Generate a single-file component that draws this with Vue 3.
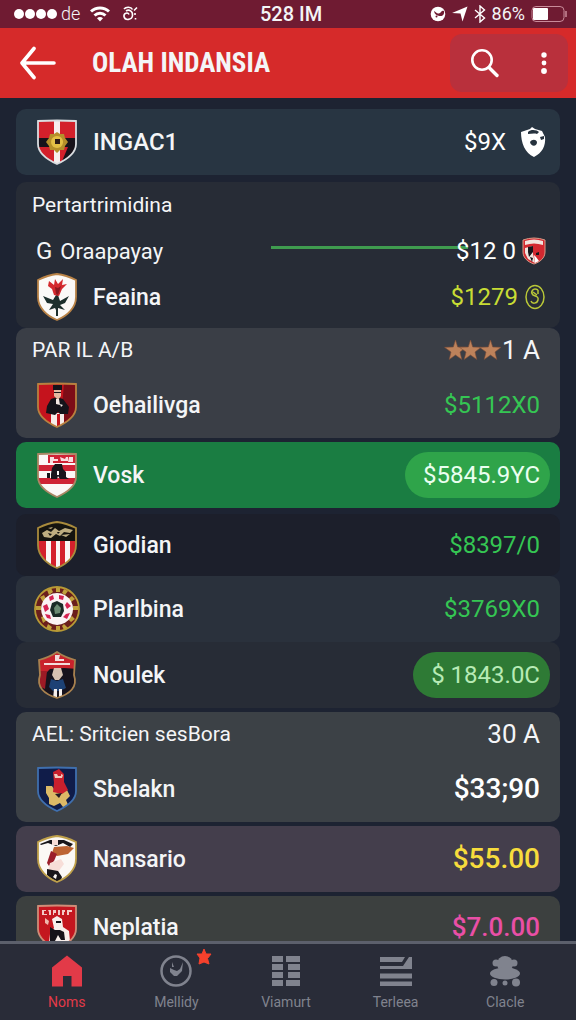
<template>
  <div class="app">
    <div class="status">
      <div class="status-side">
        <span class="signal"><i v-for="n in 4" :key="n"></i></span>
        <span class="carrier">de</span>
        <svg class="wifi" width="20" height="16" viewBox="0 0 20 16" fill="none" stroke="#fff" stroke-width="3">
          <path d="M1 5.5C6 .8 14 .8 19 5.5" />
          <path d="M4.5 9.5c3.2-3 7.800-3 11 0" />
          <path d="M10 15.500l-3-3.300c1.700-1.500 4.300-1.500 6 0z" fill="#fff" stroke="none" />
        </svg>
        <svg width="16" height="16" viewBox="0 0 16 16" fill="none" stroke="#fff" stroke-width="1.600">
          <path d="M2 3c2-2.500 7-2.500 8.500.500M4 5c3-2 7 0 6.500 4.500C10 14 3 15 2 10.500 1.500 7 6 6 7 8.500M12 4.500L15 1.500M13 7v2M13.500 12v1.500" />
        </svg>
      </div>
      <span class="clock">528 IM</span>
      <div class="status-side end">
        <svg width="16" height="16" viewBox="0 0 16 16">
          <circle cx="8" cy="8" r="7.300" fill="#fff" />
          <path d="M4 5c2 1 2.500 3 5 2.500S11 4 14 5c.500 3-1 5-3.500 5S4.500 9 4 5z" fill="#6f1b32" />
          <circle cx="6.500" cy="10.500" r="1" fill="#6f1b32" />
        </svg>
        <svg width="16" height="16" viewBox="0 0 16 16" fill="#fff">
          <path d="M0 7L15.500.500 10.500 15.500 8.500 7.500z" />
        </svg>
        <svg width="12" height="18" viewBox="0 0 12 18" fill="none" stroke="#fff" stroke-width="1.400">
          <path d="M1 5l9.500 8L6 17V1l4.500 4L1 13" />
        </svg>
        <span class="percent">86%</span>
        <svg width="37" height="18" viewBox="0 0 37 18">
          <rect x="1" y="1.500" width="32" height="15" rx="4" fill="none" stroke="#c98b9a" />
          <rect x="2" y="3" width="15" height="12" rx="1" fill="#fff" />
          <path d="M35 6v6" stroke="#c98b9a" stroke-width="1.500" />
        </svg>
      </div>
    </div>

    <header class="topbar">
      <button class="icon-btn back" aria-label="Back">
        <svg width="36" height="34" viewBox="0 0 36 34" fill="none" stroke="#fff" stroke-width="3.600" stroke-linecap="round" stroke-linejoin="round">
          <path d="M14 2.500L2 17l12 14.500M3 17h31" />
        </svg>
      </button>
      <h1>OLAH INDANSIA</h1>
      <div class="actions">
        <button class="icon-btn" aria-label="Search">
          <svg width="30" height="30" viewBox="0 0 30 30" fill="none" stroke="#fff" stroke-width="2.600" stroke-linecap="round">
            <circle cx="12" cy="12" r="9.700" />
            <path d="M19 19.500l8 8" stroke-width="3.400" />
          </svg>
        </button>
        <button class="icon-btn" aria-label="More">
          <svg width="8" height="24" viewBox="0 0 8 24" fill="#fff">
            <circle cx="4" cy="4" r="2.700" />
            <circle cx="4" cy="12" r="2.400" />
            <circle cx="4" cy="20" r="2.900" />
          </svg>
        </button>
      </div>
    </header>

    <main class="list">
      <section
        v-for="card in cards"
        :key="card.id"
        class="card"
        :class="card.tone"
      >
        <div v-if="card.title" class="card-head">
          <h2>{{ card.title }}</h2>
          <span v-if="card.count" class="count">
            <svg v-if="card.stars" width="58" height="22" viewBox="0 0 58 22" fill="#bd825b" stroke="#7d4e38" stroke-width=".6">
              <path
                v-for="x in [0, 15, 35]"
                :key="x"
                :transform="`translate(${x} 0)`"
                d="M11.500 1l2.200 7 8.300.300-6 4.700 1.800 7.500-6.300-4.500L5.200 20.500 7 13 .500 8.300 9.300 8z"
              />
            </svg>
            {{ card.count }}
          </span>
        </div>

        <div
          v-for="row in card.rows"
          :key="row.name"
          class="row"
          :class="{ plain: !row.crest }"
        >
          <svg v-if="row.crest" class="crest" width="42" height="48" viewBox="0 0 42 48">
            <clipPath :id="'clip-' + row.crest">
              <path :d="crests[row.crest].outline" />
            </clipPath>
            <g :clip-path="`url(#clip-${row.crest})`">
              <path
                v-for="(shape, i) in crests[row.crest].shapes"
                :key="i"
                :d="shape[1]"
                :fill="shape[0]"
              />
            </g>
            <path
              :d="crests[row.crest].outline"
              fill="none"
              :stroke="crests[row.crest].border"
              stroke-width="1.800"
            />
          </svg>
          <span v-else class="mark">G</span>
          <span class="name">{{ row.name }}</span>
          <span v-if="row.line" class="line"></span>
          <span class="price" :class="row.color">{{ row.price }}</span>

          <svg v-if="row.badge === 'mask'" class="badge" width="26" height="32" viewBox="0 0 26 32">
            <path d="M1 6l9-3 2-2 3 2 7 2 3 6c1 9-3 16-11 20C5 27 1 17 1 6z" fill="#fff" />
            <path d="M8 6c3-3 9-2 11 0l-2 2c-3-1-6 0-9 0zM10 16c2-3 6-3 7 0 0 5-6 5-7 0zM20 11l4-1v3l-3 1z" fill="#26323e" />
          </svg>
          <svg v-if="row.badge === 'shield'" class="badge" width="24" height="28" viewBox="0 0 24 28">
            <path d="M1 3q11-4 22 0v12c0 6-5 10-11 12C6 25 1 21 1 15z" fill="#d32830" stroke="#d99b87" />
            <path d="M3 4q9-3 18 0v4q-9-3-18 0zM3 11l8-2v8l2 9-7-4-3-6z" fill="#f1e4de" />
            <path d="M6 10l5-1v6l-4 5-1-5zM14 16l3-1v3h-3zM8 20l3 1-1 4z" fill="#17141a" />
            <path d="M12 18l2 2 3 4-4 2z" fill="#fff" />
          </svg>
          <svg v-if="row.badge === 'coin'" class="badge" width="22" height="26" viewBox="0 0 22 26" fill="none" stroke="#b9c738" stroke-width="1.500">
            <ellipse cx="11" cy="13" rx="9" ry="11.500" />
            <path d="M14 6c-5-3-8 2-5 5 3 1 6 2 5 5-1 4-6 4-7 1M14 6v4M9 8l4 3" />
          </svg>
        </div>
      </section>
    </main>

    <nav class="tabs">
      <a
        v-for="tab in tabs"
        :key="tab.label"
        href="#"
        class="tab"
        :class="{ active: tab.active }"
      >
        <svg width="34" height="34" viewBox="0 0 34 34" fill="currentColor">
          <path v-if="tab.icon === 'home'" d="M17 1.500L32 13.500V32.500H21.500V22h-8.500v10.500H2V13.500z" />
          <g v-if="tab.icon === 'clock'">
            <circle cx="17" cy="17" r="14.500" fill="none" stroke="currentColor" stroke-width="2.500" />
            <path d="M11 14l4 2 3 1 3-2 3-7-1 9-5 5h-3l-4-4zM13 8l2 5h-2z" />
          </g>
          <path v-if="tab.icon === 'grid'" d="M3 2h11v6H3zM17 2h14v6H17zM3 10h11v6H3zM19 10h12v6H19zM3 18h11v6H3zM19 18h12v6H19zM3 26h11v6H3zM17 26h14v6H17z" />
          <path v-if="tab.icon === 'lines'" d="M1 3h25l-3 5H1zM1 12h23l6-9h3v12H1zM1 19.500h32v5H1zM1 27.500h32v4.500H1z" />
          <g v-if="tab.icon === 'bear'">
            <circle cx="17" cy="10" r="8" />
            <circle cx="8" cy="9" r="3.500" />
            <circle cx="26" cy="9" r="3.500" />
            <ellipse cx="17" cy="19.500" rx="15" ry="6" />
            <circle cx="6" cy="28.500" r="3.500" />
            <circle cx="17" cy="29" r="2.500" />
            <circle cx="28" cy="28.500" r="4" />
          </g>
        </svg>
        <svg v-if="tab.alert" class="alert" width="16" height="18" viewBox="0 0 16 18">
          <path d="M8 1l2 5h5l-3.500 4.500L13 16l-5-2-5 2 1-6-3-4h5z" fill="#f5412c" stroke="#f5412c" stroke-linejoin="round" />
        </svg>
        <span>{{ tab.label }}</span>
      </a>
    </nav>
  </div>
</template>

<script setup>
const shield = "M2 3Q21 2 40 3V26C40 35 32 41 21 46 10 41 2 35 2 26Z";
const rounded = "M2 7Q12 2 21 1 30 2 40 7V24C40 35 31 43 21 47 11 43 2 35 2 24Z";
const full = "M-2 0H44V48H-2Z";

// each shape is [fill, path], painted in order inside the outline
const crests = {
  ingac: {
    outline: shield,
    border: "#d9dde0",
    shapes: [
      ["#d3202b", full],
      ["#17121a", "M0 20H42V29H0ZM32 29H42V48H24Z"],
      ["#f7eeee", "M18 0H24V48H18Z"],
      ["#b58f2a", "M21 14l3 2 4 0 1 4 3 4-3 4-1 4-4 0-3 3-3-3-4 0-1-4-3-4 3-4 1-4 4 0z"],
      ["#e3bf45", "M21 18a6 6 0 1 0 .1 0z"],
      ["#2c1b16", "M19 21h5v5h-5z"]
    ]
  },
  feana: {
    outline: rounded,
    border: "#b98347",
    shapes: [
      ["#fbf9f7", full],
      ["#1d2f2c", "M20 22l2 0 2 6 9-5-4 7-5 2 5 5-7-2-1 4-2-4-6 2 4-6-6-1-4-7 10 4z"],
      ["#d42a2e", "M13 8l5 4 1-6 3 5 5-5-1 6 5-1-5 5-3 7-5-1-2-6-4-3z"],
      ["#8c1920", "M19 14l3 1 3-2-3 9-2-1z"],
      ["#1d2f2c", "M20 35h2v8h-2z"]
    ]
  },
  oehal: {
    outline: shield,
    border: "#b9803f",
    shapes: [
      ["#c5131d", full],
      ["#7d0d17", "M28 3H42V48H24Z"],
      ["#f6ece9", "M15 32h13v16H15z"],
      ["#c5131d", "M21 33h3v15h-3z"],
      ["#15131a", "M15 18l6-2 6 2 6 8-1 7-8 0-2-2-3 3-9-2 1-7z"],
      ["#e3b9a3", "M18 7h7v8l-3 4-4-4z"],
      ["#15131a", "M17 4h9v5h-9zM18 11h7v1h-7z"],
      ["#f4e9e5", "M20 18h3l1 6-4-1zM24 23l3 1-2 2z"]
    ]
  },
  vask: {
    outline: shield,
    border: "#a98664",
    shapes: [
      ["#fbf7f6", full],
      ["#cf2335", "M12 4h29v8H12zM0 14h42v6H0zM0 27h42v6H0z"],
      ["#f8dfe0", "M14 6h4v2h4v2h-5v2h-3zM24 6l5 2 1-2h2v4h-7zM33 6h4v5h-5z"],
      ["#17151b", "M19 13h7l1 5 3 3v5l3 2h-9l-2-3-1 3h-6v-5l1-6zM11 22h3v5h-3z"],
      ["#fbf7f6", "M21 20h2v4h-2z"]
    ]
  },
  giodian: {
    outline: rounded,
    border: "#a98b3c",
    shapes: [
      ["#faf6f5", full],
      ["#d4212c", "M0 20h10v28H0zM15 20h5v28h-5zM24 20h5v28h-5zM34 20h8v28h-8z"],
      ["#15140f", "M0 0h42v20H0z"],
      ["#bfae80", "M6 12l5-3 4 2 4-4 4 3 6-3 8 2-3 3-6-1-4 4-4-2-5 4-7-1zM12 7l5-1-2 2zM25 14l9-1-4 3z"],
      ["#15140f", "M12 12l4 1-2 2zM21 11l3 0-2 2z"]
    ]
  },
  plarlbina: {
    outline: "M21 2A22 22 0 0 1 21 46 22 22 0 0 1 21 2Z",
    border: "#b89a35",
    shapes: [
      ["#6b1f1c", full],
      ["#c0a13c", "M20 2h4v5h-4zM28 4l4 2-3 4-3-2zM36 11l3 3-4 3-3-3zM37 21h5v4h-5zM36 31l3 3-4 3-3-3zM28 39l4 4-4 2-2-4zM20 41h4v5h-4zM12 39l4 3-2 4-4-2zM5 32l4-1 2 4-4 3zM0 21h5v4H0zM4 12l4-2 2 4-3 3zM11 5l4-2 2 4-4 3z"],
      ["#faf3f4", "M21 8a16 16 0 1 0 .1 0z"],
      ["#d52452", "M13 12l4-2 1 4-4 2zM23 10l5 1-1 4-4-1zM31 17l4 4-4 3-2-4zM7 21l4-2 2 5-4 3zM30 29l4-1-3 6-4-2zM9 29l5 1 1 4-4-1z"],
      ["#1b2a26", "M21 16l6 3 1 7-3 6h-8l-3-7 2-7z"],
      ["#6c8a73", "M21 19l4 4-1 5-5 1-1-6z"]
    ]
  },
  noulek: {
    outline: "M3 9Q14 6 21 1 28 6 39 9L38 24C42 36 34 43 21 47 8 43 0 36 4 24Z",
    border: "#a8814f",
    shapes: [
      ["#17131d", full],
      ["#c9222c", "M0 0h42v18L28 17 14 18 4 28H0z"],
      ["#9c1a25", "M4 20h7l-2 18-6-3z"],
      ["#f3dcdc", "M19 4h5l-1 4h5v2h-9zM8 12h26v2H8z"],
      ["#d7c2b2", "M18 17h7l2 7-4 5h-4l-3-5z"],
      ["#1d4175", "M15 28l6 2 6-2 3 9-6 3h-7l-4-4z"],
      ["#f5f0ef", "M18 38h3v10h-4zM23 38h3v10h-3z"]
    ]
  },
  sbelakn: {
    outline: shield,
    border: "#3f6fae",
    shapes: [
      ["#101c49", full],
      ["#dcb967", "M10 21l6 0 4 6 11-2 3 6-4 4 3 7h-6l-3-4-6 3-5-2 0-6-3-5z"],
      ["#c9202d", "M17 7l6-3 5 5 0 8 4 8-6 4-9-2 1-9z"],
      ["#f0c9bd", "M18 9h3l1 2h3v-2l2 1-1 3h-7z"],
      ["#251a25", "M19 29l7-1-3 5z"]
    ]
  },
  nansario: {
    outline: rounded,
    border: "#bfa04a",
    shapes: [
      ["#fbf8f5", full],
      ["#18161b", "M4 9l10-4 14 0 9 4-3 3-7-4-7 3-8-3-7 2z"],
      ["#bd6433", "M18 12l13-1 7 2-6 6-11 2-5-3z"],
      ["#9b1f2b", "M15 16l6 3-3 7-5 5-2-3z"],
      ["#f7ded8", "M16 5h6v5h-6zM14 28l11-4 3 5-6 8-10-1z"],
      ["#18161b", "M11 34l11 2 4 6-2 6-8-4-5-4z"],
      ["#fbf8f5", "M19 39l2 1-1 4-3-2z"]
    ]
  },
  neplatia: {
    outline: shield,
    border: "#cf8d78",
    shapes: [
      ["#c4161f", full],
      ["#f3c9c6", "M6 7h4v1H8v3h3v1H6zM12 7h3v5h-2V9zM17 7h3v3h-2v2h-1zM22 7h2v5h-2zM26 7h3v2h-1v3h-2zM31 7h5v2h-3v3h-2z"],
      ["#f7efec", "M16 16l5-3 5 3 1 8 6 4 2 20H12l2-17 4-6z"],
      ["#15131a", "M14 24l5 3 5 0 4 2 1 8-4 0-3-5-3 6-5 0zM20 18h5v2h-5z"],
      ["#efb9ae", "M9 15l4 3-1 4-3-2z"]
    ]
  }
};

const cards = [
  {
    id: 1,
    tone: "navy",
    rows: [{ crest: "ingac", name: "INGAC1", price: "$9X", color: "white", badge: "mask" }]
  },
  {
    id: 2,
    tone: "slate compact",
    title: "Pertartrimidina",
    rows: [
      { name: "Oraapayay", price: "$12 0", color: "white", line: true, badge: "shield" },
      { crest: "feana", name: "Feaina", price: "$1279", color: "lime", badge: "coin" }
    ]
  },
  {
    id: 3,
    tone: "gray",
    title: "PAR IL A/B",
    count: "1 A",
    stars: true,
    rows: [{ crest: "oehal", name: "Oehailivga", price: "$5112X0", color: "green" }]
  },
  {
    id: 4,
    tone: "selected",
    rows: [{ crest: "vask", name: "Vosk", price: "$5845.9YC", color: "pill" }]
  },
  {
    id: 5,
    tone: "dark",
    rows: [{ crest: "giodian", name: "Giodian", price: "$8397/0", color: "green" }]
  },
  {
    id: 6,
    tone: "steel",
    rows: [{ crest: "plarlbina", name: "Plarlbina", price: "$3769X0", color: "green" }]
  },
  {
    id: 7,
    tone: "slate",
    rows: [{ crest: "noulek", name: "Noulek", price: "$ 1843.0C", color: "pill dim" }]
  },
  {
    id: 8,
    tone: "ash",
    title: "AEL: Sritcien sesBora",
    count: "30 A",
    rows: [{ crest: "sbelakn", name: "Sbelakn", price: "$33;90", color: "white big" }]
  },
  {
    id: 9,
    tone: "plum",
    rows: [{ crest: "nansario", name: "Nansario", price: "$55.00", color: "yellow big" }]
  },
  {
    id: 10,
    tone: "moss",
    rows: [{ crest: "neplatia", name: "Neplatia", price: "$7.0.00", color: "pink" }]
  }
];

const tabs = [
  { label: "Noms", icon: "home", active: true },
  { label: "Mellidy", icon: "clock", alert: true },
  { label: "Viamurt", icon: "grid" },
  { label: "Terleea", icon: "lines" },
  { label: "Clacle", icon: "bear" }
];
</script>

<style>
body {
  background: #fff;
}
</style>

<style scoped>
.app {
  height: 100vh;
  display: flex;
  flex-direction: column;
  background: #1d2332;
  color: #f4f5f7;
  font-family: Roboto, "Liberation Sans", sans-serif;
  overflow: hidden;
}

.status {
  flex: none;
  display: flex;
  align-items: center;
  height: 28px;
  padding: 0 8px 0 14px;
  background: #6f1b32;
  font-size: 18px;
  line-height: 24px;
}

.status-side {
  flex: 1;
  display: flex;
  align-items: center;
  gap: 4px;
}

.status-side.end {
  justify-content: flex-end;
  gap: 6px;
}

.signal {
  display: flex;
  gap: 1px;
}

.signal i {
  width: 10px;
  height: 10px;
  border-radius: 50%;
  background: #fff;
}

.carrier {
  font-weight: 300;
}

.wifi {
  margin: 0 8px 0 6px;
}

.clock {
  font-size: 20px;
  font-weight: 500;
}

.topbar {
  flex: none;
  display: flex;
  align-items: center;
  height: 70px;
  padding: 0 8px 0 20px;
  background: #d62a2a;
}

.icon-btn {
  display: flex;
  align-items: center;
  justify-content: center;
  padding: 0;
  border: none;
  background: none;
  cursor: pointer;
}

.topbar h1 {
  flex: 1;
  margin: 0 0 0 36px;
  font-family: "Roboto Condensed", "Liberation Sans Narrow", Roboto, sans-serif;
  font-size: 27px;
  font-weight: 700;
  white-space: nowrap;
}

.actions {
  box-sizing: border-box;
  display: flex;
  align-items: center;
  justify-content: space-between;
  width: 118px;
  height: 58px;
  padding: 0 20px;
  border-radius: 12px;
  background: #b9303c;
}

.list {
  flex: 1;
  min-height: 0;
  overflow-y: auto;
  scrollbar-width: none;
  padding: 11px 16px 0;
}

.card {
  margin-bottom: 4px;
  border-radius: 10px;
}

.navy {
  margin-bottom: 7px;
  background: #283542;
}

.slate {
  background: #272c36;
}

.compact {
  margin-bottom: 0;
  padding-bottom: 8px;
}

.gray {
  background: #3a3e46;
}

.selected {
  margin-bottom: 6px;
  background: #1a7d42;
}

.dark {
  margin-bottom: 0;
  background: #1c1f2b;
}

.steel {
  margin-bottom: 0;
  background: #2a313c;
}

.ash {
  background: #3c4146;
}

.plum {
  background: #443e4c;
}

.moss {
  background: #3c403f;
}

.card-head {
  display: flex;
  align-items: center;
  justify-content: space-between;
  height: 44px;
  padding: 0 20px 0 16px;
}

.card-head h2 {
  margin: 0;
  font-size: 21px;
  font-weight: 400;
  white-space: nowrap;
}

.count {
  display: flex;
  align-items: center;
  font-size: 26px;
}

.row {
  display: flex;
  align-items: center;
  height: 66px;
  padding: 0 20px;
}

.dark .row,
.moss .row {
  height: 62px;
}

.compact .row,
.compact .card-head {
  height: 46px;
}

.crest {
  flex: none;
  margin-right: 15px;
  overflow: visible;
}

.mark {
  margin-right: 8px;
  font-size: 24px;
}

.name {
  font-size: 23px;
  font-weight: 500;
}

.navy .name {
  font-size: 24px;
}

.plain .name {
  font-size: 22px;
  font-weight: 400;
}

.line {
  flex: 1;
  height: 8px;
  margin: 0 -12px 0 108px;
  border-top: 3px solid #3f9c4f;
}

.price {
  margin-left: auto;
  font-size: 24px;
  line-height: 24px;
  white-space: nowrap;
}

.badge {
  flex: none;
  margin-left: 6px;
}

.navy .badge {
  margin-left: 14px;
}

.compact .row,
.navy .row {
  padding-right: 14px;
}

.white {
  color: #fff;
}

.lime {
  color: #c8dc34;
}

.green {
  color: #35c653;
}

.yellow {
  color: #f7dc3c;
}

.pink {
  color: #e94fa6;
  font-size: 26px;
  font-weight: 500;
}

.big {
  font-size: 28px;
  font-weight: 500;
}

.pill {
  margin-right: -10px;
  padding: 0 10px 0 18px;
  border-radius: 23px;
  background: #2fa44a;
  color: #eafff0;
  line-height: 46px;
}

.pill.dim {
  background: #2e7a35;
  color: #b7ebb5;
}

.tabs {
  flex: none;
  display: flex;
  height: 76px;
  padding: 0 16px 0 12px;
  border-top: 3px solid #5c606c;
  border-bottom: 4px solid #fff;
  background: #292c38;
}

.tab {
  position: relative;
  flex: 1;
  display: flex;
  flex-direction: column;
  align-items: center;
  gap: 4px;
  padding-top: 10px;
  color: #80838e;
  font-size: 14px;
  line-height: 20px;
  text-decoration: none;
}

.tab.active {
  color: #e23a48;
}

.alert {
  position: absolute;
  top: 4px;
  left: 50%;
  margin-left: 20px;
}
</style>
